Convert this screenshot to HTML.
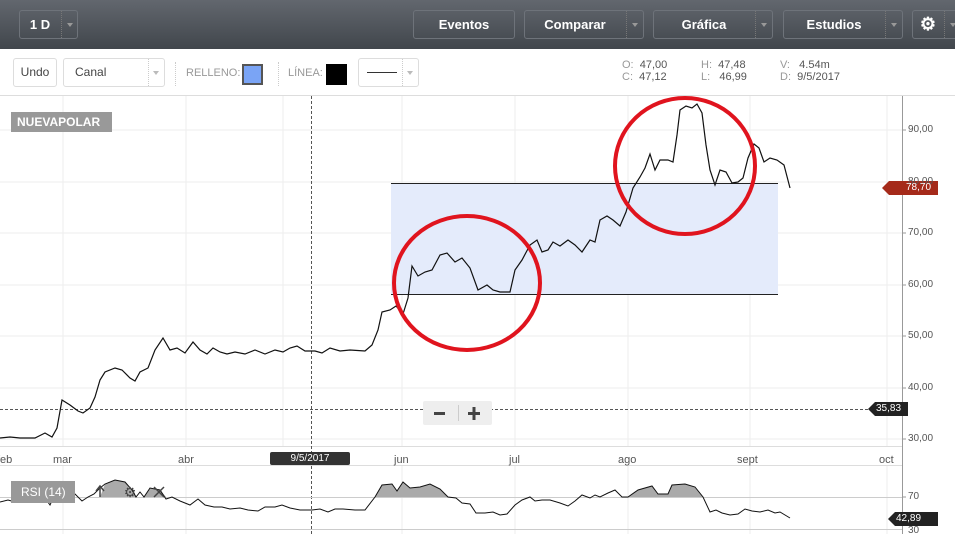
<!DOCTYPE html>
<html><head><meta charset="utf-8"><style>
*{margin:0;padding:0;box-sizing:border-box}
body{width:955px;height:534px;overflow:hidden;background:#fff;font-family:"Liberation Sans",sans-serif;position:relative}
.top{position:absolute;left:0;top:0;width:955px;height:49px;background:linear-gradient(#62676e,#41464c)}
.btn{position:absolute;top:10px;height:29px;border:1px solid #6e737a;border-radius:3px;color:#fff;font-weight:bold;font-size:13px;line-height:27px}
.btn .l{position:absolute;left:0;text-align:center}
.btn .d{position:absolute;top:0;height:27px;border-left:1px dotted #777;width:17px}
.btn .d:after{content:"";position:absolute;left:5px;top:12px;border:3px solid transparent;border-top:4px solid #999}
.tb{position:absolute;top:58px;height:29px;border:1px solid #ddd;border-radius:3px;font-size:12px;color:#444;line-height:27px}
.small{position:absolute;font-size:11px;color:#999}
.ax{position:absolute;font-size:10px;color:#555}
.mo{position:absolute;top:454px;font-size:11px;color:#555}
</style></head><body>
<div class="top">
<div class="btn" style="left:19px;width:59px"><span class="l" style="width:40px">1 D</span><span class="d" style="left:41px"></span></div>
<div class="btn" style="left:413px;width:102px"><span class="l" style="width:100px">Eventos</span></div>
<div class="btn" style="left:524px;width:120px"><span class="l" style="width:100px">Comparar</span><span class="d" style="left:101px"></span></div>
<div class="btn" style="left:653px;width:120px"><span class="l" style="width:100px">Gráfica</span><span class="d" style="left:101px"></span></div>
<div class="btn" style="left:783px;width:120px"><span class="l" style="width:100px">Estudios</span><span class="d" style="left:101px"></span></div>
<div class="btn" style="left:912px;width:50px"><span class="l" style="width:30px;font-size:18px">⚙</span><span class="d" style="left:31px"></span></div>
</div>
<div class="tb" style="left:13px;width:44px;text-align:center">Undo</div>
<div class="tb" style="left:63px;width:102px;padding-left:11px">Canal<span style="position:absolute;left:84px;top:0;height:27px;border-left:1px dotted #ccc;width:17px"></span><span style="position:absolute;left:89px;top:12px;border:3px solid transparent;border-top:4px solid #bbb"></span></div>
<div style="position:absolute;left:175px;top:62px;height:24px;border-left:1px dotted #ccc"></div>
<div class="small" style="left:186px;top:67px">RELLENO:</div>
<div style="position:absolute;left:242px;top:64px;width:21px;height:21px;background:#7aa4f5;border:2px solid #555"></div>
<div style="position:absolute;left:278px;top:62px;height:24px;border-left:1px dotted #ccc"></div>
<div class="small" style="left:288px;top:67px">LÍNEA:</div>
<div style="position:absolute;left:326px;top:64px;width:21px;height:21px;background:#000"></div>
<div class="tb" style="left:358px;width:61px"><span style="position:absolute;left:8px;top:13px;width:30px;border-top:1px solid #333"></span><span style="position:absolute;left:43px;top:0;height:27px;border-left:1px dotted #ccc"></span><span style="position:absolute;left:48px;top:12px;border:3px solid transparent;border-top:4px solid #bbb"></span></div>
<div style="position:absolute;left:622px;top:59px;font-size:11px;line-height:12px;color:#999">O:&nbsp; <span style="color:#555">47,00</span><br>C:&nbsp; <span style="color:#555">47,12</span></div>
<div style="position:absolute;left:701px;top:59px;font-size:11px;line-height:12px;color:#999">H:&nbsp; <span style="color:#555">47,48</span><br>L:&nbsp;&nbsp; <span style="color:#555">46,99</span></div>
<div style="position:absolute;left:780px;top:59px;font-size:11px;line-height:12px;color:#999">V:&nbsp;&nbsp; <span style="color:#555">4.54m</span><br>D:&nbsp; <span style="color:#555">9/5/2017</span></div>

<svg style="position:absolute;left:0;top:0" width="955" height="534">
<line x1="0" y1="95.5" x2="955" y2="95.5" stroke="#ddd"/>
<g stroke="#eee">
<line x1="63" y1="96" x2="63" y2="446"/><line x1="186" y1="96" x2="186" y2="446"/><line x1="283" y1="96" x2="283" y2="446"/><line x1="402" y1="96" x2="402" y2="446"/><line x1="515" y1="96" x2="515" y2="446"/><line x1="628" y1="96" x2="628" y2="446"/><line x1="750" y1="96" x2="750" y2="446"/><line x1="887" y1="96" x2="887" y2="446"/>
<line x1="0" y1="130" x2="902" y2="130"/><line x1="0" y1="182" x2="902" y2="182"/><line x1="0" y1="233" x2="902" y2="233"/><line x1="0" y1="285" x2="902" y2="285"/><line x1="0" y1="336" x2="902" y2="336"/><line x1="0" y1="388" x2="902" y2="388"/><line x1="0" y1="439" x2="902" y2="439"/>
<line x1="63" y1="466" x2="63" y2="534"/><line x1="186" y1="466" x2="186" y2="534"/><line x1="402" y1="466" x2="402" y2="534"/><line x1="515" y1="466" x2="515" y2="534"/><line x1="628" y1="466" x2="628" y2="534"/><line x1="750" y1="466" x2="750" y2="534"/><line x1="887" y1="466" x2="887" y2="534"/>
</g>
<line x1="0" y1="446.5" x2="902" y2="446.5" stroke="#ddd"/>
<line x1="0" y1="465.5" x2="902" y2="465.5" stroke="#ddd"/>
<line x1="902.5" y1="96" x2="902.5" y2="534" stroke="#999"/>
<g stroke="#999"><line x1="902" y1="130" x2="906" y2="130"/><line x1="902" y1="182" x2="906" y2="182"/><line x1="902" y1="233" x2="906" y2="233"/><line x1="902" y1="285" x2="906" y2="285"/><line x1="902" y1="336" x2="906" y2="336"/><line x1="902" y1="388" x2="906" y2="388"/><line x1="902" y1="439" x2="906" y2="439"/><line x1="902" y1="497" x2="906" y2="497"/></g>
<rect x="391" y="183" width="387" height="111" fill="#e4ebfb"/>
<line x1="391" y1="183.5" x2="778" y2="183.5" stroke="#222"/>
<line x1="391" y1="294.5" x2="778" y2="294.5" stroke="#222"/>
<line x1="311.5" y1="96" x2="311.5" y2="534" stroke="#555" stroke-dasharray="3,2"/>
<line x1="0" y1="409.5" x2="902" y2="409.5" stroke="#555" stroke-dasharray="3,2"/>
<polyline fill="none" stroke="#111" stroke-width="1.2" points="0,438 10,437 20,438 35,438 45,433 52,437 57,428 62,400 70,405 78,411 83,413 90,408 95,397 100,380 105,372 115,368 122,370 130,378 135,381 140,372 148,368 155,350 163,338 170,350 177,348 185,353 193,342 200,350 207,354 213,348 220,352 227,354 235,352 245,354 255,350 265,354 275,350 283,352 290,348 297,346 305,351 315,351 322,353 330,348 340,351 350,350 365,351 372,345 378,330 382,312 390,310 396,306 403,314 408,298 412,266 418,276 425,272 432,270 440,255 447,253 455,262 462,258 470,268 478,290 487,285 493,290 500,292 510,292 515,270 522,260 530,245 537,240 542,252 548,250 553,242 560,246 568,240 575,245 582,252 590,240 595,242 600,220 607,216 613,220 620,226 626,212 633,188 640,177 645,168 650,154 655,170 660,160 668,160 673,162 677,135 680,110 686,106 692,108 697,104 702,113 706,145 710,170 715,185 720,170 726,172 732,183 738,182 743,178 748,158 754,144 759,148 764,162 770,158 777,160 784,165 790,188"/>
<ellipse cx="467" cy="283" rx="73" ry="67" fill="none" stroke="#e0141e" stroke-width="4"/>
<ellipse cx="685" cy="166" rx="70" ry="68" fill="none" stroke="#e0141e" stroke-width="4"/>
<line x1="0" y1="497.5" x2="902" y2="497.5" stroke="#ccc"/>
<line x1="0" y1="529.5" x2="902" y2="529.5" stroke="#ccc"/>
<path fill="#aaa" d="M100,497 L105,484 L115,480 L125,482 L132,490 L137,497 Z M144,497 L150,488 L160,490 L166,497 Z M375,497 L382,485 L392,484 L397,491 L403,482 L410,488 L420,487 L430,484 L440,489 L448,497 Z M628,497 L638,490 L652,486 L658,494 L668,494 L672,485 L685,484 L695,487 L703,497 Z"/>
<polyline fill="none" stroke="#111" stroke-width="1" points="0,502 8,500 15,502 25,502 34,502 40,494 45,498 50,505 55,494 60,500 68,498 75,494 82,501 88,497 94,494 100,488 105,484 115,480 125,482 132,490 136,497 140,492 144,497 150,488 160,490 166,499 172,497 180,501 190,505 198,499 205,505 214,507 222,507 230,509 240,508 248,510 258,511 265,507 275,507 282,505 290,508 300,510 312,510 320,509 328,512 335,509 343,509 355,510 365,510 375,497 382,485 392,484 397,491 403,482 410,488 420,487 430,484 440,489 448,497 456,498 462,503 470,504 476,513 485,513 493,512 500,515 507,514 515,505 522,500 530,497 535,501 542,500 550,500 560,503 568,506 575,501 582,495 590,498 595,495 600,497 608,493 615,490 622,497 628,497 638,490 652,486 658,494 668,494 672,485 685,484 695,487 703,497 710,512 716,510 722,513 730,515 738,514 745,509 752,511 760,512 768,510 775,513 780,512 790,518"/>
<polygon points="882,188 889,181 938,181 938,195 889,195" fill="#a52a1a"/>
<polygon points="868,409 875,402 908,402 908,416 875,416" fill="#222"/>
<polygon points="888,519 895,512 938,512 938,526 895,526" fill="#222"/>
<rect x="270" y="452" width="80" height="13" rx="2" fill="#333"/>
<rect x="423" y="401" width="69" height="24" rx="2" fill="#eee"/>
<line x1="458.5" y1="405" x2="458.5" y2="421" stroke="#ccc"/>
<rect x="434" y="412" width="11" height="3" fill="#444"/>
<rect x="468" y="412" width="12" height="3" fill="#444"/><rect x="472.5" y="407" width="3" height="13" fill="#444"/>
<g stroke="#444" stroke-width="1.5" fill="none"><path d="M100,497 V487 M96,491 L100,486 L104,491"/><path d="M154,487 L164,497 M164,487 L154,497"/></g>
<text x="130" y="497" font-size="14" fill="#444" text-anchor="middle" font-family="DejaVu Sans">⚙</text>
</svg>
<div style="position:absolute;left:11px;top:112px;width:101px;height:20px;background:#999;color:#fff;font-size:12px;font-weight:bold;line-height:20px;padding-left:6px">NUEVAPOLAR</div>
<div style="position:absolute;left:11px;top:481px;width:64px;height:22px;background:#999;color:#fff;font-size:12px;line-height:22px;padding-left:10px">RSI (14)</div>
<div class="ax" style="left:908px;top:124px">90,00</div>
<div class="ax" style="left:908px;top:176px">80,00</div>
<div class="ax" style="left:908px;top:227px">70,00</div>
<div class="ax" style="left:908px;top:279px">60,00</div>
<div class="ax" style="left:908px;top:330px">50,00</div>
<div class="ax" style="left:908px;top:382px">40,00</div>
<div class="ax" style="left:908px;top:433px">30,00</div>
<div class="ax" style="left:908px;top:491px">70</div>
<div class="ax" style="left:908px;top:525px">30</div>
<div class="ax" style="left:906px;top:182px;color:#fff">78,70</div>
<div class="ax" style="left:876px;top:403px;color:#fff">35,83</div>
<div class="ax" style="left:896px;top:513px;color:#fff">42,89</div>
<div class="mo" style="left:-3px">feb</div>
<div class="mo" style="left:53px">mar</div>
<div class="mo" style="left:178px">abr</div>
<div class="mo" style="left:394px">jun</div>
<div class="mo" style="left:509px">jul</div>
<div class="mo" style="left:618px">ago</div>
<div class="mo" style="left:737px">sept</div>
<div class="mo" style="left:879px">oct</div>
<div style="position:absolute;left:270px;top:453px;width:80px;text-align:center;font-size:10px;color:#fff">9/5/2017</div>
</body></html>
